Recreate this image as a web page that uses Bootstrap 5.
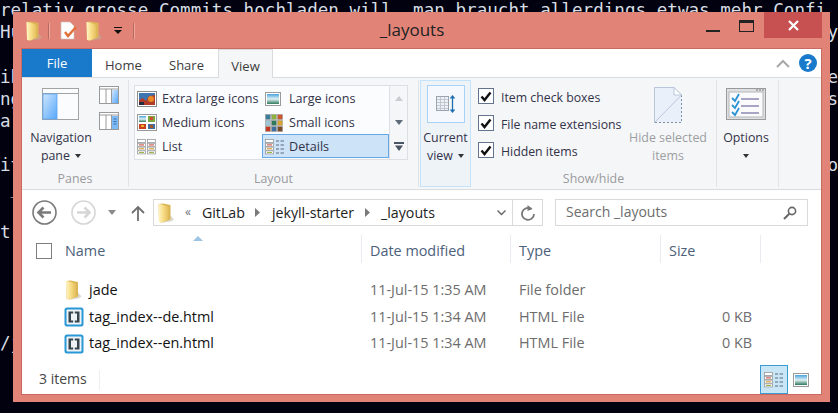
<!DOCTYPE html>
<html lang="en">
<head>
<meta charset="UTF-8">
<title>_layouts</title>
<link href="https://cdn.jsdelivr.net/npm/bootstrap@5.3.2/dist/css/bootstrap.min.css" rel="stylesheet">
<style>
    html, body { height: 100%; }
    body { background: #01010f; overflow: hidden; font-family: "Open Sans", "Liberation Sans", sans-serif; font-size: 14.4px; line-height: 1.2; color: #222; }
    .svg-defs { position: absolute; width: 0; height: 0; }

    /* terminal behind the window */
    .term { font-family: "DejaVu Sans Mono", "Liberation Mono", monospace; font-size: 17.6px; line-height: 22.2px; color: #d7dde2; margin-top: -1px; }
    .term-line { height: 22.2px; white-space: pre; }

    /* window */
    .win { position: absolute; left: 13px; top: 12px; width: 817px; height: 390px; background: #e18477; padding: 0 9px 8px 9px; }
    .titlebar { height: 37px; }
    .qat { width: 118px; height: 37px; }
    .qat-sep { width: 1px; height: 16px; background: #b9695e; box-shadow: 1px 0 0 #eda89d; }
    .win-title { font-size: 17px; color: #222; height: 37px; line-height: 36px; }
    .win-ctrls { width: 138px; margin-right: -1px; }
    .btn-min { width: 14px; height: 2px; background: #222; margin: 18px 19px 0 0; }
    .btn-max { width: 15px; height: 12px; border: 1px solid #222; border-top-width: 3px; margin: 8px 10px 0 0; }
    .btn-close-x { width: 58px; height: 26px; background: #c75050; }
    .client { background: #fff; min-height: 0; box-shadow: 0 0 0 1px #c9695f; }

    /* ribbon */
    .tabs { height: 29px; border-bottom: 1px solid #dadbdc; font-size: 13px; color: #3b3b3b; }
    .tab-file { width: 70px; background: #1979ca; color: #fff; height: 28px; line-height: 28px; text-align: center; }
    .tab-item { height: 28px; line-height: 32px; }
    .tab-home { margin-left: 13px; width: 64px; }
    .tab-share { width: 49px; }
    .tab-view { width: 55px; height: 29px; background: #f5f6f7; border: 1px solid #dadbdc; border-bottom: 0; text-align: center; }
    .tab-right { padding-right: 4px; gap: 9px; }
    .ribbon { height: 112px; background: #f5f6f7; border-bottom: 1px solid #dadbdc; padding-top: 2px; font-size: 12.4px; color: #33334a; }
    .rb-group { height: 107px; border-right: 1px solid #e2e3e4; }
    .rb-label { height: 17px; line-height: 17px; color: #9a9a9f; font-size: 12.4px; text-align: center; margin-top: auto; }
    .rb-panes { width: 107px; }
    .rb-layout { width: 290px; }
    .rb-show { width: 298px; }
    .rb-opts { width: 62px; }
    .big-btn { text-align: center; line-height: 18px; }
    .big-icon { height: 49px; }
    .caret-dn { display: inline-block; width: 0; height: 0; border: 3px solid transparent; border-top: 4px solid #333; border-bottom: 0; vertical-align: 2px; margin-left: 2px; }
    .nav-btn { width: 64px; margin-left: 7px; }
    .pane-icons { margin: 6px 0 0 6px; gap: 8px; }

    .gallery { margin: 5px 0 0 5px; }
    .gal-box { width: 256px; height: 75px; background: #fbfcfd; border: 1px solid #dcdfe3; display: grid; grid-template-columns: 127px 127px; grid-auto-rows: 24px; }
    .gal-item { color: #33334a; font-size: 12.6px; padding-top: 1px; }
    .gal-a { padding-left: 2px; }
    .gal-b { padding-left: 3px; }
    .gal-a .gal-ico { width: 25px; }
    .gal-b .gal-ico { width: 24px; }
    .gal-on { background: #cce3f8; box-shadow: inset 0 0 0 1px #66a7e8; }
    .gal-scroll { width: 18px; height: 75px; border: 1px solid #dcdfe3; border-left: 0; }
    .gal-scroll > div { height: 24.3px; }

    .cur-view { width: 51px; height: 107px; margin-left: 1px; background: #eef3f8; border: 1px solid #c5e2fb; }
    .cur-box { width: 38px; height: 38px; background: #f5f9fd; border: 1px solid #a9d2f7; margin: 4px 0 6px; }
    .check-col { width: 150px; margin-left: 7px; padding-top: 8px; gap: 11px; }
    .check-row { height: 16px; gap: 7px; line-height: 19px; font-size: 12.3px; }
    .check-box { width: 16px; height: 16px; border: 1px solid #64748e; background: #fff; flex: none; }
    .hide-btn { width: 80px; color: #9c9ea3; }
    .opt-btn { padding-right: 3px; }

    /* address row */
    .navrow { height: 45px; padding: 0 12px 0 10px; }
    .addr { width: 390px; height: 27px; border: 1px solid #d9d9d9; margin-left: 8px; font-size: 14.2px; color: #222; }
    .addr-sep { width: 1px; height: 100%; background: #d9d9d9; }
    .search { width: 253px; height: 27px; border: 1px solid #d9d9d9; margin-left: 12px; color: #6d6d6d; padding: 0 10px; font-size: 14px; }

    /* file list */
    .list-head { height: 28px; color: #4c607a; position: relative; }
    .col-sel { width: 43px; padding-left: 14px; }
    .col-name { width: 297px; }
    .col-date { width: 149px; }
    .col-type { width: 150px; }
    .col-size { width: 100px; }
    .list-head > div { height: 28px; line-height: 32px; }
    .list-head .col-date, .list-head .col-type, .list-head .col-size { padding-left: 8px; }
    .list-head .col-name, .list-head .col-date, .list-head .col-type, .list-head .col-size { border-right: 1px solid #e8ecf1; }
    .sel-box { width: 16px; height: 16px; border: 1px solid #7d7d7d; margin-top: 8px; }
    .sort-up { position: absolute; left: 171px; top: 1px; }
    .file-rows { margin-top: 14px; }
    .file-row { height: 26.7px; line-height: 26.7px; color: #6d6d6d; }
    .file-row .col-sel { width: 43px; padding: 0; }
    .file-name { width: 305px; color: #111; }
    .file-ico { width: 24px; }
    .file-ico-b { margin-left: -1px; width: 25px; }
    .file-size { width: 83px; text-align: right; }

    .statusbar { height: 29px; margin-top: auto; padding-left: 17px; color: #444; font-size: 14px; }
    .status-sep { width: 1px; height: 20px; background: #eceff2; margin-left: 12px; }
    .view-on { width: 28px; height: 29px; background: #c9e6f7; border: 1px solid #3c9bd0; }
    .view-off { width: 33px; height: 29px; padding-right: 12px; }
</style>
</head>
<body>
<svg class="svg-defs" aria-hidden="true">
    <defs>
        <linearGradient id="fold" x1="0" x2="1" y1="0" y2="0"><stop offset="0" stop-color="#fff4c6"/><stop offset=".5" stop-color="#f7dc84"/><stop offset="1" stop-color="#e3bd5c"/></linearGradient>
        <linearGradient id="paneblue" x1="0" x2="1" y1="0" y2="1"><stop offset="0" stop-color="#cfe6fe"/><stop offset="1" stop-color="#57a8fa"/></linearGradient>
        <linearGradient id="sky" x1="0" x2="0" y1="0" y2="1"><stop offset="0" stop-color="#4aa3dc"/><stop offset=".5" stop-color="#dff0f5"/><stop offset="1" stop-color="#2e7a5a"/></linearGradient>
        <symbol id="i-folder" viewBox="0 0 16 20">
            <path d="M7 6 L16 16.5 L13 18.5 L5 19.5Z" fill="#b9b3a4" opacity=".5"/>
            <path d="M0.5 1 L5 .5 L12.5 2 V16.5 L4 19.5 L1 19 Z" fill="#dcb556"/>
            <path d="M0.5 1 L4 1.5 L10.5 4 V16.8 L4 19.5 L1 19 Z" fill="url(#fold)"/>
        </symbol>
        <symbol id="i-brackets" viewBox="0 0 20 20">
            <rect x="0.5" y="0.5" width="19" height="19" rx="2.5" fill="#2a98d6"/>
            <rect x="2.5" y="2.5" width="15" height="15" rx="1" fill="#eef3f6"/>
            <path d="M9.2 4.5H4.5V15.5H9.2V13.4H7V6.6H9.2ZM10.8 4.5H15.5V15.5H10.8V13.4H13V6.6H10.8Z" fill="#37454f"/>
        </symbol>
        <symbol id="i-mini-rows" viewBox="0 0 9 16">
            <g fill="#fff" stroke="#9a9a9a" stroke-width=".8"><rect x=".5" y=".5" width="8" height="3"/><rect x=".5" y="4.3" width="8" height="3"/><rect x=".5" y="8.1" width="8" height="3"/><rect x=".5" y="11.9" width="8" height="3"/></g>
            <rect x="2" y="5.4" width="5" height="1" fill="#d0453a"/><rect x="2" y="9.2" width="5" height="1" fill="#e0a030"/><rect x="2" y="13" width="5" height="1" fill="#9ab84a"/>
        </symbol>
        <symbol id="i-details" viewBox="0 0 20 16">
            <use href="#i-mini-rows" x="0" y="0" width="9" height="16"/>
            <path d="M11 2H14M15.5 2H19M11 6H14M15.5 6H19M11 10H14M15.5 10H19M11 14H14M15.5 14H19" stroke="#5f6a78" stroke-width="1"/>
        </symbol>
        <symbol id="i-thumb" viewBox="0 0 16 14">
            <rect x=".5" y=".5" width="15" height="13" fill="#fff" stroke="#9a9a9a"/>
            <rect x="2" y="2" width="12" height="10" fill="url(#sky)"/>
        </symbol>
    </defs>
</svg>

<div class="term">
    <div class="term-line">relativ grosse Commits hochladen will, man braucht allerdings etwas mehr Confi</div>
    <div class="term-line d-flex justify-content-between"><span>Hu</span><span>y</span></div>
    <div class="term-line"></div>
    <div class="term-line d-flex justify-content-between"><span>ih</span><span>e</span></div>
    <div class="term-line d-flex justify-content-between"><span>ng</span><span>s</span></div>
    <div class="term-line">ar</div>
    <div class="term-line"></div>
    <div class="term-line d-flex justify-content-between"><span>it</span><span>o</span></div>
    <div class="term-line"> _</div>
    <div class="term-line"></div>
    <div class="term-line">t</div>
    <div class="term-line"></div>
    <div class="term-line"></div>
    <div class="term-line"></div>
    <div class="term-line"></div>
    <div class="term-line">/j</div>
</div>

<div class="win d-flex flex-column">
    <div class="titlebar d-flex align-items-start">
        <div class="qat d-flex align-items-center">
            <svg class="ms-1" width="16" height="20"><use href="#i-folder"/></svg>
            <div class="qat-sep" style="margin-left:6px"></div>
            <svg style="margin-left:11px" width="18" height="19" viewBox="0 0 18 19">
                <path d="M1 1H10L14 5V18H1Z" fill="#fdfdfd" stroke="#c9c4bc" stroke-width=".6"/>
                <path d="M5 11L8 15L16 6" fill="none" stroke="#e2703a" stroke-width="2.4"/>
            </svg>
            <svg style="margin-left:8px" width="16" height="20"><use href="#i-folder"/></svg>
            <svg style="margin-left:12px" width="8" height="8" viewBox="0 0 8 8"><path d="M0 0H8V1H0ZM0 3H8L4 7Z" fill="#111"/></svg>
            <div class="qat-sep" style="margin-left:11px"></div>
        </div>
        <div class="win-title flex-grow-1 text-center">_layouts</div>
        <div class="win-ctrls d-flex justify-content-end align-items-start">
            <div class="btn-min"></div>
            <div class="btn-max"></div>
            <div class="btn-close-x d-flex align-items-center justify-content-center">
                <svg width="11" height="11" viewBox="0 0 11 11"><path d="M1 1L10 10M10 1L1 10" stroke="#fff" stroke-width="2.2"/></svg>
            </div>
        </div>
    </div>

    <div class="client flex-grow-1 d-flex flex-column">
        <div class="tabs d-flex flex-none">
            <div class="tab-file">File</div>
            <div class="tab-item tab-home">Home</div>
            <div class="tab-item tab-share">Share</div>
            <div class="tab-item tab-view">View</div>
            <div class="tab-right ms-auto d-flex align-items-center">
                <svg width="14" height="9" viewBox="0 0 14 9"><path d="M1 8L7 2L13 8" fill="none" stroke="#a8a8a8" stroke-width="2"/></svg>
                <svg width="18" height="18" viewBox="0 0 18 18"><circle cx="9" cy="9" r="9" fill="#1979ca"/><text x="9" y="14.5" font-size="15" font-weight="700" font-family="Open Sans" text-anchor="middle" fill="#fff">?</text></svg>
            </div>
        </div>

        <div class="ribbon d-flex">
            <div class="rb-group rb-panes d-flex flex-column">
                <div class="d-flex">
                    <div class="big-btn nav-btn">
                        <div class="big-icon d-flex align-items-center justify-content-center">
                            <svg width="38" height="33" viewBox="0 0 38 33">
                                <rect x=".5" y=".5" width="36" height="31" fill="#fbfcfd" stroke="#a3a3a3"/>
                                <rect x="1" y="5" width="36" height="1" fill="#a3a3a3"/>
                                <rect x="1" y="6" width="14" height="25" fill="url(#paneblue)" stroke="#5aa5ef" stroke-width=".8"/>
                            </svg>
                        </div>
                        <div>Navigation</div>
                        <div>pane <span class="caret-dn"></span></div>
                    </div>
                    <div class="pane-icons d-flex flex-column">
                        <svg width="20" height="18" viewBox="0 0 20 18">
                            <rect x=".5" y=".5" width="19" height="17" fill="#fff" stroke="#9a9a9a"/><path d="M1 3H19M7 3V17M12.5 3V17" stroke="#9a9a9a"/>
                            <rect x="13" y="4" width="6" height="13" fill="url(#paneblue)"/>
                        </svg>
                        <svg width="20" height="18" viewBox="0 0 20 18">
                            <rect x=".5" y=".5" width="19" height="17" fill="#fff" stroke="#9a9a9a"/><path d="M1 3H19M7 3V17M12.5 3V17" stroke="#9a9a9a"/>
                            <rect x="13" y="4" width="6" height="13" fill="#7fbaf5"/><path d="M14.5 7H17.5M14.5 9.5H17.5M14.5 12H17.5" stroke="#2f6fb3"/>
                        </svg>
                    </div>
                </div>
                <div class="rb-label">Panes</div>
            </div>

            <div class="rb-group rb-layout d-flex flex-column">
                <div class="gallery d-flex">
                    <div class="gal-box">
                        <div class="gal-item gal-a d-flex align-items-center">
                            <div class="gal-ico d-flex"><svg width="20" height="16" viewBox="0 0 20 16">
                                <rect x=".5" y=".5" width="19" height="15" fill="#fff" stroke="#8a8a8a"/><rect x="2" y="2" width="16" height="12" fill="#3e74b0"/><path d="M2 14V9L6 7L9 10L12 5L18 4V14Z" fill="#b23c2a"/><circle cx="14" cy="8" r="3" fill="#e98a25"/><rect x="2" y="11" width="5" height="3" fill="#262b40"/>
                            </svg></div>Extra large icons
                        </div>
                        <div class="gal-item gal-b d-flex align-items-center">
                            <div class="gal-ico d-flex"><svg width="16" height="14"><use href="#i-thumb"/></svg></div>Large icons
                        </div>
                        <div class="gal-item gal-a d-flex align-items-center">
                            <div class="gal-ico d-flex"><svg width="20" height="17" viewBox="0 0 20 17">
                                <rect x=".5" y=".5" width="19" height="16" fill="#fff" stroke="#9a9a9a"/>
                                <rect x="2" y="2" width="7" height="6" fill="url(#sky)"/><rect x="11" y="2" width="7" height="6" fill="#7aa83c"/><rect x="13" y="3" width="3" height="3" fill="#d34a34"/>
                                <rect x="2" y="10" width="7" height="5" fill="#c9401f"/><rect x="4" y="11" width="3" height="2" fill="#e9b02a"/><rect x="11" y="10" width="7" height="5" fill="#3e6f9e"/><rect x="13" y="11" width="3" height="3" fill="#a3562c"/>
                            </svg></div>Medium icons
                        </div>
                        <div class="gal-item gal-b d-flex align-items-center">
                            <div class="gal-ico d-flex"><svg width="18" height="18" viewBox="0 0 18 18">
                                <rect width="18" height="18" fill="#fff"/>
                                <g stroke="#9a9a9a" stroke-width=".6">
                                    <rect x=".5" y=".5" width="5" height="5" fill="#3b7e9c"/><rect x="6.5" y=".5" width="5" height="5" fill="#8fb23f"/><rect x="12.5" y=".5" width="5" height="5" fill="#c9572b"/>
                                    <rect x=".5" y="6.5" width="5" height="5" fill="#9cc7d8"/><rect x="6.5" y="6.5" width="5" height="5" fill="#2e7a5a"/><rect x="12.5" y="6.5" width="5" height="5" fill="#d8a22c"/>
                                    <rect x=".5" y="12.5" width="5" height="5" fill="#c23a22"/><rect x="6.5" y="12.5" width="5" height="5" fill="#3e6f9e"/><rect x="12.5" y="12.5" width="5" height="5" fill="#7b4a28"/>
                                </g>
                            </svg></div>Small icons
                        </div>
                        <div class="gal-item gal-a d-flex align-items-center">
                            <div class="gal-ico d-flex"><svg width="19" height="16" viewBox="0 0 19 16">
                                <use href="#i-mini-rows" width="9" height="16"/><use href="#i-mini-rows" x="10" width="9" height="16"/>
                            </svg></div>List
                        </div>
                        <div class="gal-item gal-b gal-on d-flex align-items-center">
                            <div class="gal-ico d-flex"><svg width="20" height="16"><use href="#i-details"/></svg></div>Details
                        </div>
                    </div>
                    <div class="gal-scroll d-flex flex-column">
                        <div class="d-flex align-items-center justify-content-center"><svg width="8" height="5" viewBox="0 0 8 5"><path d="M0 5L4 0L8 5Z" fill="#c9ccd0"/></svg></div>
                        <div class="d-flex align-items-center justify-content-center"><svg width="8" height="5" viewBox="0 0 8 5"><path d="M0 0L4 5L8 0Z" fill="#5f6a78"/></svg></div>
                        <div class="d-flex align-items-center justify-content-center"><svg width="10" height="9" viewBox="0 0 10 9"><path d="M0 0H10V2H0ZM1 3.5H9L5 9Z" fill="#4a5563"/></svg></div>
                    </div>
                </div>
                <div class="rb-label">Layout</div>
            </div>

            <div class="rb-group rb-show d-flex">
                <div class="cur-view big-btn d-flex flex-column align-items-center flex-none">
                    <div class="cur-box d-flex align-items-center justify-content-center flex-none">
                        <svg width="20" height="18" viewBox="0 0 20 18">
                            <rect x=".5" y="1.5" width="12" height="14" fill="#eef2f7" stroke="#9aa3ae"/>
                            <path d="M1 4.5H12M1 7.5H12M1 10.5H12M1 13.5H12M4.5 2V15M8.5 2V15" stroke="#b7bec7" stroke-width=".8"/>
                            <path d="M16.5 1V17M14.5 3.5L16.5 1L18.5 3.5M14.5 14.5L16.5 17L18.5 14.5" fill="none" stroke="#1f6fb0" stroke-width="1.3"/>
                        </svg>
                    </div>
                    <div>Current</div>
                    <div>view <span class="caret-dn"></span></div>
                </div>
                <div class="flex-grow-1 d-flex flex-column">
                    <div class="d-flex">
                        <div class="check-col d-flex flex-column">
                            <div class="check-row d-flex"><span class="check-box d-flex align-items-center justify-content-center"><svg width="12" height="11" viewBox="0 0 12 11"><path d="M1.5 5.5L4.5 9L10.5 1.5" fill="none" stroke="#111" stroke-width="2.4"/></svg></span>Item check boxes</div>
                            <div class="check-row d-flex"><span class="check-box d-flex align-items-center justify-content-center"><svg width="12" height="11" viewBox="0 0 12 11"><path d="M1.5 5.5L4.5 9L10.5 1.5" fill="none" stroke="#111" stroke-width="2.4"/></svg></span>File name extensions</div>
                            <div class="check-row d-flex"><span class="check-box d-flex align-items-center justify-content-center"><svg width="12" height="11" viewBox="0 0 12 11"><path d="M1.5 5.5L4.5 9L10.5 1.5" fill="none" stroke="#111" stroke-width="2.4"/></svg></span>Hidden items</div>
                        </div>
                        <div class="big-btn hide-btn">
                            <div class="big-icon d-flex align-items-center justify-content-center">
                                <svg width="28" height="36" viewBox="0 0 28 36">
                                    <path d="M.5.5H20L27.5 8V35.5H.5Z" fill="#e9f0fa"/>
                                    <path d="M27.5 8V35.5H.5" fill="none" stroke="#7f8ea8" stroke-dasharray="2 2"/>
                                    <path d="M.5 35.5V.5H20L27.5 8L.5 35.5" fill="none" stroke="#b9c6da"/>
                                    <path d="M20 .5V8H27.5Z" fill="#fff" stroke="#b9c6da"/>
                                </svg>
                            </div>
                            <div>Hide selected</div>
                            <div>items</div>
                        </div>
                    </div>
                    <div class="rb-label">Show/hide</div>
                </div>
            </div>

            <div class="rb-group rb-opts">
                <div class="big-btn opt-btn">
                    <div class="big-icon d-flex align-items-center justify-content-center">
                        <svg width="40" height="33" viewBox="0 0 40 33">
                            <rect x=".5" y=".5" width="39" height="31" fill="#dfe0e3" stroke="#9a9a9a"/>
                            <rect x="3" y="4" width="34" height="25" fill="#fbfbfd" stroke="#b5b5b5"/>
                            <path d="M30 2H38" stroke="#777" stroke-dasharray="2 1"/>
                            <path d="M15 11H33M15 18H33M15 25H33" stroke="#a7a4c4" stroke-width="2"/>
                            <path d="M6 10L9 13L13 6M6 17L9 20L13 13M6 24L9 27L13 20" fill="none" stroke="#2b92d6" stroke-width="1.8"/>
                        </svg>
                    </div>
                    <div>Options</div>
                    <div><span class="caret-dn m-0"></span></div>
                </div>
            </div>
        </div>

        <div class="navrow d-flex align-items-center flex-none">
            <svg width="25" height="25" viewBox="0 0 25 25"><circle cx="12.5" cy="12.5" r="11.5" fill="none" stroke="#7a7a7a" stroke-width="1.6"/><path d="M19 12.5H7M11.5 7.5L6.5 12.5L11.5 17.5" fill="none" stroke="#7a7a7a" stroke-width="2.6"/></svg>
            <svg style="margin-left:14px" width="25" height="25" viewBox="0 0 25 25"><circle cx="12.5" cy="12.5" r="11.5" fill="none" stroke="#d6d6d6" stroke-width="1.6"/><path d="M6 12.5H18M13.5 7.5L18.5 12.5L13.5 17.5" fill="none" stroke="#d6d6d6" stroke-width="2.6"/></svg>
            <svg style="margin-left:12px" width="8" height="5" viewBox="0 0 8 5"><path d="M0 0H8L4 5Z" fill="#8a8a8a"/></svg>
            <svg style="margin-left:15px" width="14" height="16" viewBox="0 0 14 16"><path d="M7 16V2M1 8L7 2L13 8" fill="none" stroke="#6f6f6f" stroke-width="1.8"/></svg>
            <div class="addr d-flex align-items-center">
                <svg class="ms-1" width="16" height="20"><use href="#i-folder"/></svg>
                <span class="text-secondary" style="margin-left:11px;font-size:12px">«</span>
                <span style="margin-left:11px">GitLab</span>
                <svg style="margin:0 12px 0 10px" width="5" height="9" viewBox="0 0 5 9"><path d="M0 0L5 4.5L0 9Z" fill="#7a7a7a"/></svg>
                <span>jekyll-starter</span>
                <svg style="margin:0 11px" width="5" height="9" viewBox="0 0 5 9"><path d="M0 0L5 4.5L0 9Z" fill="#7a7a7a"/></svg>
                <span>_layouts</span>
                <svg class="ms-auto" style="margin-right:6px" width="9" height="6" viewBox="0 0 9 6"><path d="M.5.5L4.5 4.5L8.5.5" fill="none" stroke="#666" stroke-width="1.4"/></svg>
                <div class="addr-sep"></div>
                <svg style="margin:0 7px 0 8px" width="14" height="16" viewBox="0 0 14 16"><path d="M10.5 4A6 6 0 1 0 13 9" fill="none" stroke="#777" stroke-width="1.8"/><path d="M6.5 0L11.5 4L6.5 6Z" fill="#777"/></svg>
            </div>
            <div class="search d-flex align-items-center justify-content-between">
                <span>Search _layouts</span>
                <svg width="14" height="14" viewBox="0 0 14 14"><circle cx="9" cy="5" r="3.6" fill="none" stroke="#666" stroke-width="1.6"/><path d="M6.3 7.7L1 13" stroke="#666" stroke-width="2"/></svg>
            </div>
        </div>

        <div class="list-head d-flex flex-none">
            <div class="col-sel"><div class="sel-box"></div></div>
            <div class="col-name">Name</div>
            <div class="col-date">Date modified</div>
            <div class="col-type">Type</div>
            <div class="col-size">Size</div>
            <svg class="sort-up" width="10" height="5" viewBox="0 0 10 5"><path d="M0 5L5 0L10 5Z" fill="#9cc4e4"/></svg>
        </div>

        <div class="file-rows">
            <div class="file-row d-flex">
                <div class="col-sel"></div>
                <div class="file-name d-flex align-items-center"><div class="file-ico d-flex"><svg width="17" height="20"><use href="#i-folder"/></svg></div>jade</div>
                <div class="col-date">11-Jul-15 1:35 AM</div>
                <div class="col-type">File folder</div>
            </div>
            <div class="file-row d-flex">
                <div class="col-sel"></div>
                <div class="file-name d-flex align-items-center"><div class="file-ico file-ico-b d-flex"><svg width="20" height="20"><use href="#i-brackets"/></svg></div>tag_index--de.html</div>
                <div class="col-date">11-Jul-15 1:34 AM</div>
                <div class="col-type">HTML File</div>
                <div class="file-size">0 KB</div>
            </div>
            <div class="file-row d-flex">
                <div class="col-sel"></div>
                <div class="file-name d-flex align-items-center"><div class="file-ico file-ico-b d-flex"><svg width="20" height="20"><use href="#i-brackets"/></svg></div>tag_index--en.html</div>
                <div class="col-date">11-Jul-15 1:34 AM</div>
                <div class="col-type">HTML File</div>
                <div class="file-size">0 KB</div>
            </div>
        </div>

        <div class="statusbar d-flex align-items-center flex-none">
            <span>3 items</span>
            <div class="status-sep"></div>
            <div class="view-on ms-auto d-flex align-items-center justify-content-center">
                <svg width="20" height="16"><use href="#i-details"/></svg>
            </div>
            <div class="view-off d-flex align-items-center justify-content-end">
                <svg width="16" height="14"><use href="#i-thumb"/></svg>
            </div>
        </div>
    </div>
</div>
</body>
</html>
